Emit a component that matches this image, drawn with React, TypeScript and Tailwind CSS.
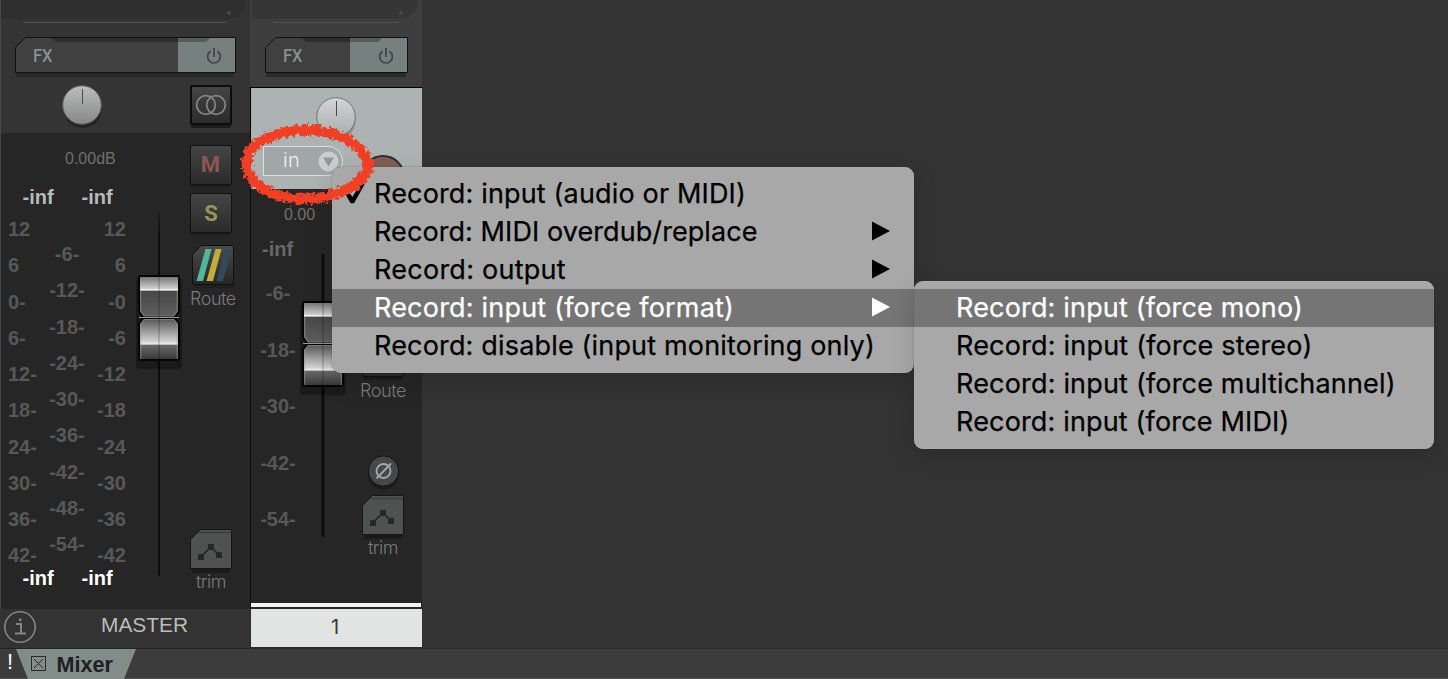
import React from "react";

const SANS = "font-['Liberation_Sans',Arial,sans-serif]";
const INTER = "font-['Inter',sans-serif]";

function TopBand({ wide }: { wide?: boolean }) {
  return (
    <div className="flex h-[37px] flex-col">
      <div
        className={`mr-[4px] flex h-[19px] items-center justify-end rounded-br-[18px] pr-[15px] pt-[7px] ${wide ? "ml-px bg-[#2f2f2f]" : "ml-[2px] bg-[#363636]"}`}
      >
        <span className="h-1 w-1 rounded-full bg-[#484848]" />
      </div>
      <div className="mx-[23px] mt-[3px] h-px bg-[#505050]" />
    </div>
  );
}

function PowerIcon() {
  return (
    <svg width="16" height="18" viewBox="0 0 16 18" fill="none" stroke="#3f4644" strokeWidth="1.7">
      <path d="M4.6 4.2 A6.4 6.4 0 1 0 11.4 4.2" />
      <path d="M8 1V10" />
    </svg>
  );
}

function FxSlot({ width, split }: { width: number; split: number }) {
  const notchL = 37;
  const notchR = width - 26;
  return (
    <svg width={width} height="41" viewBox={`0 0 ${width} 41`}>
      <rect x="1" y="34" width={width - 3} height="6" fill="#292929" />
      <path d={`M.5 10.5 L10.5 .5 H${width - 0.5} V35.5 H.5Z`} fill="#404040" />
      <rect x={split} y="1" width={width - split - 1} height="34" fill="#76807e" />
      <path d={`M${notchL} 1 H${notchR} L${notchR - 4} 5 H${notchL + 4}Z`} fill="#000" fillOpacity=".28" />
      <path d={`M.5 10.5 L10.5 .5 H${width - 0.5} V35.5 H.5Z`} fill="none" stroke="#101010" />
      <text
        x="18"
        y="25.3"
        fontSize="18.5"
        fontWeight="500"
        fill="#87908d"
        fontFamily="Roboto, sans-serif"
        textLength="19.5"
        lengthAdjust="spacingAndGlyphs"
      >
        FX
      </text>
      <g transform={`translate(${width - 30} 10)`}>
        <PowerIcon />
      </g>
    </svg>
  );
}

function Knob({ light }: { light?: boolean }) {
  const id = light ? "knobLight" : "knobGrey";
  return (
    <svg width="42" height="46" viewBox="0 0 42 46">
      <defs>
        <linearGradient id={id} x1="0" y1="0" x2="0" y2="1">
          <stop offset="0" stopColor={light ? "#d3d5d5" : "#bbbdbd"} />
          <stop offset="1" stopColor={light ? "#a9adad" : "#858887"} />
        </linearGradient>
      </defs>
      <circle cx="21.5" cy="24" r="19" fill="#000" fillOpacity={light ? 0.18 : 0.3} />
      <circle cx="21" cy="20" r="19.3" fill={`url(#${id})`} stroke={light ? "#707575" : "#5a5c5b"} strokeWidth="1" />
      <path d="M21.5 4V19" stroke="#4c4c4c" strokeWidth="1" />
    </svg>
  );
}

function SquareButton({ children, strong }: { children?: React.ReactNode; strong?: boolean }) {
  return (
    <div
      className={`flex h-10 w-[42px] items-center justify-center rounded-[2px] bg-linear-to-b from-[#454545] to-[#2b2b2b] shadow-[0_4px_0_-1px_#1d1d1d] ${strong ? "border-2 border-[#0d0d0d]" : "border border-[#111]"}`}
    >
      {children}
    </div>
  );
}

function RouteButton() {
  return (
    <svg width="44" height="45" viewBox="0 0 44 45">
      <defs>
        <linearGradient id="routeBg" x1="0" y1="0" x2="0" y2="1">
          <stop offset="0" stopColor="#4b4b4b" />
          <stop offset="1" stopColor="#262626" />
        </linearGradient>
      </defs>
      <rect x="2" y="38" width="41" height="5" fill="#202020" />
      <path d="M.5 9.5 L9.5 .5 H40 Q41.5 .5 41.5 2 V38 Q41.5 39.5 40 39.5 H2 Q.5 39.5 .5 38Z" fill="url(#routeBg)" stroke="#101010" />
      <path d="M13.5 4 H19.5 L11 36 H4.5Z" fill="#51b69a" />
      <path d="M23.5 4 H29.5 L21 36 H14.5Z" fill="#bfae3b" />
      <path d="M33.5 4 H39.5 L31 36 H24.5Z" fill="#34495a" />
    </svg>
  );
}

function TrimButton() {
  return (
    <svg width="42" height="45" viewBox="0 0 42 45">
      <rect x="2" y="38" width="38" height="6" fill="#1a1a1a" />
      <path d="M.5 10.5 L10.5 .5 H41.5 V39.5 H.5Z" fill="#505252" stroke="#151515" />
      <path d="M8.5 3.5 H41" stroke="#3b3c3c" strokeWidth="1.6" />
      <path d="M11 27.5 L21 18 L29 26" fill="none" stroke="#262727" strokeWidth="1.7" />
      <rect x="8" y="25" width="6" height="6" fill="#262727" />
      <rect x="18" y="15" width="6" height="6" fill="#262727" />
      <rect x="26" y="23" width="6" height="6" fill="#262727" />
    </svg>
  );
}

function Fader({ height, handleY, thick }: { height: number; handleY: number; thick?: boolean }) {
  const id = thick ? "t" : "m";
  return (
    <svg width="46" height={height} viewBox={`0 0 46 ${height}`}>
      <defs>
        <linearGradient id={`up${id}`} x1="0" y1="0" x2="0" y2="1">
          <stop offset="0" stopColor="#777" />
          <stop offset=".3" stopColor="#cfcfcf" />
          <stop offset=".33" stopColor="#fff" />
          <stop offset=".37" stopColor="#484848" />
          <stop offset="1" stopColor="#5e5e5e" />
        </linearGradient>
        <linearGradient id={`dn${id}`} x1="0" y1="0" x2="0" y2="1">
          <stop offset="0" stopColor="#585858" />
          <stop offset=".57" stopColor="#d4d4d4" />
          <stop offset=".63" stopColor="#f0f0f0" />
          <stop offset=".65" stopColor="#696969" />
          <stop offset="1" stopColor="#393939" />
        </linearGradient>
        <linearGradient id={`ln${id}`} gradientUnits="userSpaceOnUse" x1="0" y1="0" x2="0" y2="30">
          <stop offset="0" stopColor="#0c0c0c" stopOpacity={thick ? 1 : 0.2} />
          <stop offset="1" stopColor="#0c0c0c" />
        </linearGradient>
      </defs>
      <rect x={thick ? 21.5 : 22} y="0" width={thick ? 3 : 2} height={height} rx="1" fill={`url(#ln${id})`} />
      <g transform={`translate(0 ${handleY})`}>
        <rect x="0" y="3" width="46" height="91" rx="4" fill="#000" fillOpacity=".3" />
        <path d="M4 0 H42 Q44 0 44 2 V36 L40 42.5 L44 49 V84 Q44 86 42 86 H4 Q2 86 2 84 V49 L6 42.5 L2 36 V2 Q2 0 4 0Z" fill="#050505" />
        <path d="M4 2 H42 V36 L38 41 H8 L4 36Z" fill={`url(#up${id})`} />
        <path d="M4.7 16 V36 L8.3 41 H37.7 L41.3 36 V16" fill="none" stroke="#7a7a7a" strokeWidth="1.2" />
        <path d="M3 42.5 H43" stroke="#999" />
        <path d="M8 44 H38 L42 49 V84 H4 V49Z" fill={`url(#dn${id})`} />
        <path d="M4.7 84 V49 L8.3 44.5 H37.7 L41.3 49 V84" fill="none" stroke="#a0a0a0" strokeOpacity=".5" strokeWidth="1.2" />
        <path d="M23 2 V84" stroke="#000" strokeOpacity=".15" strokeWidth="2" />
      </g>
    </svg>
  );
}

function Scale({ labels, className }: { labels: string[]; className: string }) {
  return (
    <div className={`flex flex-col ${className}`}>
      {labels.map((l, i) => (
        <span key={i} className="flex h-[36.25px] flex-none items-center">
          {l}
        </span>
      ))}
    </div>
  );
}

const leftScale = ["12", "6", "0-", "6-", "12-", "18-", "24-", "30-", "36-", "42-"];
const rightScale = ["12", "6", "-0", "-6", "-12", "-18", "-24", "-30", "-36", "-42"];
const midScale = ["-6-", "-12-", "-18-", "-24-", "-30-", "-36-", "-42-", "-48-", "-54-"];

function Caption({ children }: { children: React.ReactNode }) {
  return (
    <span className={`${INTER} text-[18px] font-light leading-[20px] tracking-[-0.45px] text-[#7a7a7a]`}>
      {children}
    </span>
  );
}

function MasterStrip() {
  return (
    <section className="flex w-[250px] flex-none flex-col border-l border-[#484848] bg-[#343434]">
      <div className="-ml-px flex h-[133px] flex-none flex-col">
        <TopBand wide />
        <div className="flex h-[41px] flex-none pl-[15px]">
          <FxSlot width={221} split={163} />
        </div>
        <div className="flex justify-between pl-[61px] pr-[18px] pt-[7px]">
          <Knob />
          <SquareButton strong>
            <svg width="32" height="22" viewBox="0 0 32 22" fill="none" stroke="#848484" strokeWidth="1.8">
              <circle cx="11" cy="11" r="9.3" />
              <circle cx="21" cy="11" r="9.3" />
            </svg>
          </SquareButton>
        </div>
      </div>
      <div className="-ml-px flex h-[476px] flex-none border-l border-[#484848] bg-[#262626]">
        <div className={`flex w-[135px] flex-none flex-col ${SANS}`}>
          <div className="ml-[64px] mt-[16px] h-5 text-[16px] leading-5 text-[#707070]">0.00dB</div>
          <div className="mt-[18px] flex h-5 gap-[28px] pl-[21.5px] text-[20px] font-bold leading-5 text-[#b9b9b9]">
            <span>-inf</span>
            <span>-inf</span>
          </div>
          <div className="mt-[4px] flex h-[361px] justify-between pl-[7px] pr-[10px] text-[20px] font-bold text-[#585858]">
            <Scale labels={leftScale} className="w-[30px] items-start" />
            <Scale labels={midScale} className="mt-[25px] items-center" />
            <Scale labels={rightScale} className="w-[30px] items-end" />
          </div>
          <div className="-mt-[4px] flex h-5 gap-[28px] pl-[21.5px] text-[20px] font-bold leading-5 text-white">
            <span>-inf</span>
            <span>-inf</span>
          </div>
        </div>
        <div className="mt-[77px] w-[46px] flex-none">
          <Fader height={366} handleY={65} />
        </div>
        <div className="ml-[8px] flex w-[46px] flex-col">
          <div className="mt-[12px]">
            <SquareButton>
              <span className="-ml-px font-['Roboto',sans-serif] text-[22px] font-bold leading-none text-[#8f5651]">M</span>
            </SquareButton>
          </div>
          <div className="mt-2">
            <SquareButton>
              <span className="pt-px font-['Roboto',sans-serif] text-[22px] font-bold leading-none text-[#96965a]">S</span>
            </SquareButton>
          </div>
          <div className="ml-[2px] mt-[12px] h-[44px]">
            <RouteButton />
          </div>
          <Caption>Route</Caption>
          <div className="mt-[220px] h-[43px]">
            <TrimButton />
          </div>
          <div className="flex w-[42px] justify-center">
            <Caption>trim</Caption>
          </div>
        </div>
      </div>
      <div className="-ml-px flex h-[40px] items-start border-b border-[#242424] bg-[#333] pl-1">
        <svg width="32" height="36" viewBox="0 0 32 36" fill="none" stroke="#858585">
          <circle cx="16" cy="18" r="15.2" strokeWidth="1.6" />
          <path d="M12 15 H17 V24 M11 24.5 H22" strokeWidth="2" />
          <rect x="15" y="9.5" width="2.5" height="2.5" fill="#858585" stroke="none" />
        </svg>
        <span className={`${SANS} ml-[65px] mt-[4px] text-[20.9px] leading-6 text-[#bcbcbc]`}>MASTER</span>
      </div>
    </section>
  );
}

function TrackStrip() {
  return (
    <section className="flex w-[172px] flex-none flex-col bg-[#3e3e3e]">
      <div className="h-[87px] flex-none">
        <TopBand />
        <div className="flex h-[41px] pl-[15px]">
          <FxSlot width={143} split={85} />
        </div>
      </div>
      <div className="flex h-[102px] flex-none flex-col border-l border-t border-black bg-[#adb3b3]">
        <div className="flex h-[47px] pl-[64px] pt-[9px]">
          <Knob light />
        </div>
        <div className="mt-[11px] flex items-start pl-[12px]">
          <div className="flex h-[30px] w-[80px] flex-none items-center justify-between rounded-r-full border border-[#dcdfdf] bg-[#a1a6a6] pl-[19px] pr-[3px]">
            <span className={`${INTER} -mt-[2px] text-[20px] font-light tracking-[0.4px] text-[#f0f2f2]`}>in</span>
            <svg width="21" height="21" viewBox="0 0 21 21">
              <circle cx="10.5" cy="10.5" r="10" fill="#cbcece" />
              <path d="M5 6.5 H16 L10.5 15.5Z" fill="#929797" />
            </svg>
          </div>
          <svg className="ml-[18px] mt-[9px] flex-none" width="44" height="24" viewBox="0 0 44 24">
            <circle cx="22" cy="22" r="21" fill="#835e54" stroke="#2c2c2c" strokeWidth="2" />
          </svg>
        </div>
      </div>
      <div className="flex h-[420px] flex-none flex-col border-l border-[#0d0d0d] bg-[#262626]">
        <div className="flex h-[412px]">
          <div className={`flex w-[49px] flex-none flex-col ${SANS}`}>
            <span className="ml-[33px] mt-[16px] h-5 text-[16px] leading-5 text-[#707070]">0.00</span>
            <span className="ml-[11px] mt-[14px] h-5 text-[20px] font-bold leading-5 text-[#686868]">-inf</span>
            <div className="mt-[6px] flex flex-col items-center pl-[5px] text-[20px] font-bold text-[#585858]">
              {["-6-", "-18-", "-30-", "-42-", "-54-"].map((l) => (
                <span key={l} className="flex h-[56.5px] items-center">
                  {l}
                </span>
              ))}
            </div>
          </div>
          <div className="mt-[65px] w-[46px] flex-none">
            <Fader height={283} handleY={47} thick />
          </div>
          <div className="ml-[14px] flex w-[46px] flex-none flex-col items-center">
            <div className="mt-[148px] h-[44px]">
              <SquareButton />
            </div>
            <Caption>Route</Caption>
            <svg className="mt-[54px] flex-none" width="36" height="38" viewBox="0 0 36 38">
              <circle cx="18.5" cy="19" r="15.5" fill="#1c1c1c" />
              <circle cx="18.5" cy="16" r="15.2" fill="#454848" stroke="#121212" />
              <circle cx="18.5" cy="16" r="7" fill="none" stroke="#a5a8a7" strokeWidth="1.8" />
              <path d="M11.5 23.5 L26 8.5" stroke="#a5a8a7" strokeWidth="1.8" />
            </svg>
            <div className="mt-[2px] h-[43px]">
              <TrimButton />
            </div>
            <Caption>trim</Caption>
          </div>
        </div>
        <div className="mr-px mt-[2px] h-1 bg-[#f1f3f2]" />
      </div>
      <div className="flex h-[40px] items-center justify-center border-b-2 border-l border-[#2b2b2b] bg-[#e2e4e3]">
        <span className={`${INTER} mr-[3px] -mt-[2px] text-[20px] leading-none text-[#383838]`}>1</span>
      </div>
    </section>
  );
}

type Item = { label: string; arrow?: boolean; active?: boolean; checked?: boolean; tracking: string };

function Menu({ items, className }: { items: Item[]; className: string }) {
  return (
    <div
      className={`absolute flex flex-col overflow-hidden rounded-[9px] py-2 shadow-[0_0_1px_#222,0_8px_24px_rgba(0,0,0,0.15),inset_0_0_1px_#c8c8c8] ${className}`}
    >
      {items.map((it) => (
        <div
          key={it.label}
          className={`flex h-[38px] flex-none items-center ${it.active ? "bg-[#757575] text-white" : "text-black"}`}
        >
          <span className="flex w-[42px] flex-none justify-center">
            {it.checked && (
              <svg width="20" height="24" viewBox="0 0 20 24" className="ml-[4px]">
                <path d="M1 13.2 L4.6 10.8 L7.4 15 L16 1 L19.5 2.6 L9 21.2 H5.6Z" fill="#000" />
              </svg>
            )}
          </span>
          <span
            className={`${INTER} whitespace-nowrap text-[27px] leading-[38px] [-webkit-text-stroke:0.25px_currentColor] ${it.tracking}`}
          >
            {it.label}
          </span>
          {it.arrow && (
            <svg width="18" height="20" viewBox="0 0 18 20" className="-mt-[2px] ml-auto mr-[24px]">
              <path d="M0 .5 L18 10 L0 19.5Z" fill="currentColor" />
            </svg>
          )}
        </div>
      ))}
    </div>
  );
}

const recordItems: Item[] = [
  { label: "Record: input (audio or MIDI)", checked: true, tracking: "tracking-[0.16px]" },
  { label: "Record: MIDI overdub/replace", arrow: true, tracking: "tracking-[0.08px]" },
  { label: "Record: output", arrow: true, tracking: "tracking-[0.26px]" },
  { label: "Record: input (force format)", arrow: true, active: true, tracking: "tracking-[0.2px]" },
  { label: "Record: disable (input monitoring only)", tracking: "tracking-[0.17px]" },
];

const formatItems: Item[] = [
  { label: "Record: input (force mono)", active: true, tracking: "tracking-[0.17px]" },
  { label: "Record: input (force stereo)", tracking: "tracking-[0.2px]" },
  { label: "Record: input (force multichannel)", tracking: "tracking-[0.18px]" },
  { label: "Record: input (force MIDI)", tracking: "tracking-[0.16px]" },
];

function CrayonRing() {
  return (
    <svg className="absolute left-[232px] top-[113px]" width="150" height="102" viewBox="0 0 150 102">
      <defs>
        <filter id="crayon" x="-10%" y="-20%" width="120%" height="140%">
          <feTurbulence type="fractalNoise" baseFrequency="0.28" numOctaves="3" seed="4" result="n" />
          <feDisplacementMap in="SourceGraphic" in2="n" scale="10" xChannelSelector="R" yChannelSelector="G" />
        </filter>
      </defs>
      <path
        d="M75 17 C107 17 135.5 34 135.5 53 C135.5 68 109 86 72 86 C38 86 14.5 69 14.5 50 C14.5 31 42 17 75 17Z"
        filter="url(#crayon)"
        fill="none"
        stroke="#ef4125"
        strokeWidth="10"
      />
    </svg>
  );
}

function BottomBar() {
  return (
    <div className="flex h-[30px] flex-none items-stretch border-b border-[#505050] bg-[#3c3c3c]">
      <span className={`${SANS} flex w-[16px] items-center justify-center pb-[3px] pl-[4px] text-[22px] leading-none text-white`}>!</span>
      <div className="-mb-px flex h-[30px] w-[120px] items-center bg-[#828c89] pl-[15px] [clip-path:polygon(0_0,100%_0,90%_100%,10%_100%)]">
        <svg width="15" height="15" viewBox="0 0 15 15" fill="none" stroke="#262a29" className="-mt-px">
          <rect x=".5" y=".5" width="14" height="14" />
          <path d="M3 3 L12 12 M12 3 L3 12" />
        </svg>
        <span className={`${SANS} ml-[10.5px] mt-px text-[21.6px] font-bold leading-none text-[#1d201f]`}>Mixer</span>
      </div>
    </div>
  );
}

export default function App() {
  return (
    <div className="relative flex h-[679px] w-[1448px] flex-col overflow-hidden bg-[#333]">
      <div className="flex h-[649px] flex-none">
        <MasterStrip />
        <TrackStrip />
        <div className="flex-1 border-b border-[#2a2a2a] bg-[#333]" />
      </div>
      <BottomBar />
      <Menu items={recordItems} className="left-[332px] top-[167px] w-[582px] bg-[#a8a8a8]" />
      <Menu items={formatItems} className="left-[914px] top-[281px] w-[520px] bg-[#a8a8a8]" />
      <CrayonRing />
    </div>
  );
}
